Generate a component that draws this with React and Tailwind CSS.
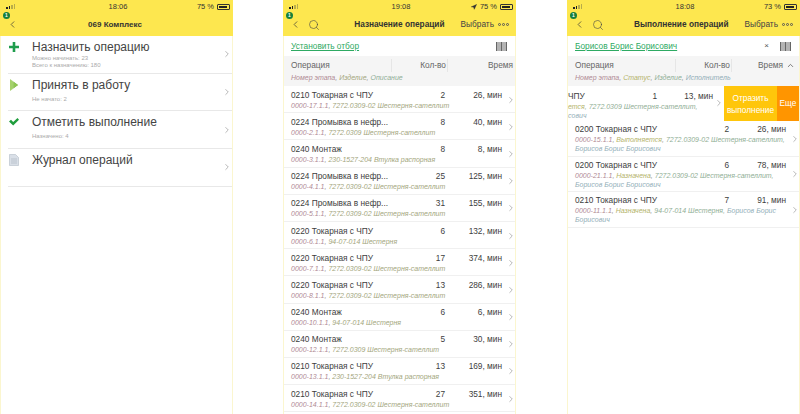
import { ChevronLeft, ChevronRight, ChevronUp, Search, Navigation } from "lucide-react";

const font = "font-['Liberation_Sans',Arial,sans-serif]";

const assignRows = [
  ["0210 Токарная с ЧПУ", 2, "26, мин", "0000-17.1.1", "7272.0309-02 Шестерня-сателлит"],
  ["0224 Промывка в нефр...", 8, "40, мин", "0000-2.1.1", "7272.0309 Шестерня-сателлит"],
  ["0240 Монтаж", 8, "8, мин", "0000-3.1.1", "230-1527-204 Втулка распорная"],
  ["0224 Промывка в нефр...", 25, "125, мин", "0000-4.1.1", "7272.0309-02 Шестерня-сателлит"],
  ["0224 Промывка в нефр...", 31, "155, мин", "0000-5.1.1", "7272.0309-02 Шестерня-сателлит"],
  ["0220 Токарная с ЧПУ", 6, "132, мин", "0000-6.1.1", "94-07-014 Шестерня"],
  ["0220 Токарная с ЧПУ", 17, "374, мин", "0000-7.1.1", "7272.0309-02 Шестерня-сателлит"],
  ["0220 Токарная с ЧПУ", 13, "286, мин", "0000-8.1.1", "7272.0309-02 Шестерня-сателлит"],
  ["0240 Монтаж", 6, "6, мин", "0000-10.1.1", "94-07-014 Шестерня"],
  ["0240 Монтаж", 5, "30, мин", "0000-12.1.1", "7272.0309 Шестерня-сателлит"],
  ["0210 Токарная с ЧПУ", 13, "169, мин", "0000-13.1.1", "230-1527-204 Втулка распорная"],
  ["0210 Токарная с ЧПУ", 27, "351, мин", "0000-14.1.1", "7272.0309-02 Шестерня-сателлит"],
];

// line1 is what follows the code and status on the first line, line2 goes below it
const doneRows = [
  ["0200 Токарная с ЧПУ", 2, "26, мин", "0000-15.1.1", "Выполняется", "7272.0309-02 Шестерня-сателлит,", "", "Борисов Борис Борисович"],
  ["0200 Токарная с ЧПУ", 6, "78, мин", "0000-21.1.1", "Назначена", "7272.0309-02 Шестерня-сателлит,", "", "Борисов Борис Борисович"],
  ["0210 Токарная с ЧПУ", 7, "91, мин", "0000-11.1.1", "Назначена", "94-07-014 Шестерня,", "Борисов Борис", "Борисович"],
];

const menu = [
  { title: "Назначить операцию", lines: ["Можно начинать: 23", "Всего к назначению: 180"], icon: "plus" },
  { title: "Принять в работу", lines: ["Не начато: 2"], icon: "play" },
  { title: "Отметить выполнение", lines: ["Назначено: 4"], icon: "check" },
  { title: "Журнал операций", lines: [], icon: "doc" },
];

function MenuIcon({ name }) {
  if (name === "plus")
    return (
      <svg width="12" height="12" viewBox="0 0 12 12">
        <path d="M4.700 1h2.600v3.700H11v2.600H7.300V11H4.700V7.300H1V4.700h3.700z" fill="#1f9d4d" />
      </svg>
    );
  if (name === "play")
    return (
      <svg width="12" height="12" viewBox="0 0 12 12">
        <path d="M2 0l3.500 3v6L2 12z" fill="#a5d16c" />
        <path d="M2 0l8 6-8 6 3.500-3V3z" fill="#7cb342" />
        <path d="M5.500 3L10 6 5.500 9z" fill="#8fc653" />
      </svg>
    );
  if (name === "check")
    return (
      <svg width="12" height="12" viewBox="0 0 12 12">
        <path d="M1 5.500L3 3.800l2.200 2.200L9.500 2 11 3.800 5.200 9.500z" fill="#1f9d3d" />
      </svg>
    );
  return (
    <svg width="12" height="12" viewBox="0 0 12 12">
      <path d="M1.500 0.500h6l3 3v8h-9z" fill="#d9dfe7" stroke="#b4bcc7" strokeWidth="0.6" />
      <path d="M3 5h6M3 7h6M3 9h6" stroke="#aab2bd" strokeWidth="0.6" />
    </svg>
  );
}

function Barcode() {
  return (
    <svg width="11" height="9" viewBox="0 0 11 9" className="shrink-0">
      <path d="M0 0h1.500v9H0zM2.500 0h1v9h-1zM4.500 0h2v9h-2zM7.500 0h1v9h-1zM9.500 0H11v9H9.500z" fill="#666" />
    </svg>
  );
}

function StatusBar({ time, battery, arrow }) {
  return (
    <div className="flex h-[13px] items-center justify-between pl-[6px] pr-[3px] text-[7.500px] text-[#333]">
      <div className="flex w-[60px] items-end gap-px">
        {[2, 3, 4, 5].map((h, i) => (
          <span
            key={i}
            className={i < 2 ? "w-[1.500px] bg-[#222]" : "w-[1.500px] bg-[#b8ac4a]"}
            style={{ height: h }}
          />
        ))}
      </div>
      <span>{time}</span>
      <div className="flex w-[60px] items-center justify-end gap-[3px]">
        {arrow && <Navigation size={6} fill="#333" />}
        <span>{battery} %</span>
        <span className="flex h-[6px] w-[13px] items-center rounded-[1px] border border-[#333] p-px">
          <span className="h-full w-[8px] bg-[#222]" />
        </span>
      </div>
    </div>
  );
}

function Header({ time, battery, arrow, title, search, action }) {
  return (
    <div className="relative h-[36px] shrink-0 bg-[#fde74f]">
      <StatusBar time={time} battery={battery} arrow={arrow} />
      <span className="absolute left-[3px] top-[12px] flex h-[7px] w-[7px] items-center justify-center rounded-full bg-[#15803d] text-[5px] font-bold text-white">
        1
      </span>
      <div className="flex h-[23px] items-center pl-[7px] pr-[7px]">
        <ChevronLeft size={11} className="text-[#333]" strokeWidth={1.5} />
        {search && <Search size={12} className="ml-[7px] text-[#444]" strokeWidth={1.2} />}
        <span
          className={
            search
              ? "flex-1 pr-[16px] text-right text-[8.300px] font-bold text-[#333]"
              : "flex-1 pr-[14px] text-center text-[8px] font-bold text-[#333]"
          }
        >
          {title}
        </span>
        {action && (
          <span className="flex items-center gap-[4px] text-[8.300px] text-[#444]">
            Выбрать
            <span className="flex gap-px">
              <i className="h-[3px] w-[3px] rounded-full border-[0.500px] border-[#555]" />
              <i className="h-[3px] w-[3px] rounded-full border-[0.500px] border-[#555]" />
              <i className="h-[3px] w-[3px] rounded-full border-[0.500px] border-[#555]" />
            </span>
          </span>
        )}
      </div>
    </div>
  );
}

function Phone({ header, children }) {
  return (
    <div className="flex h-[414px] w-[233px] shrink-0 flex-col overflow-hidden bg-white">
      {header}
      <div className="flex-1 border-x border-[#fbf6cf]">{children}</div>
    </div>
  );
}

function ColumnHead({ meta, last }) {
  return (
    <div className="h-[30px] bg-[#f5f5f5] pl-[7px] pr-[2px] pt-[3px]">
      <div className="flex h-[13px] items-center text-[8.300px] text-[#666]">
        <span className="w-[101px] border-r border-[#e6e6e6]">Операция</span>
        <span className="w-[56px] border-r border-[#e6e6e6] pr-[1px] text-right">Кол-во</span>
        <span className="flex flex-1 items-center justify-end gap-[3px]">{last}</span>
      </div>
      <div className="mt-[1px] text-[7px] italic leading-[9px]">{meta}</div>
    </div>
  );
}

function RowTop({ name, qty, time }) {
  return (
    <div className="flex h-[11px] items-center text-[8.300px] leading-[11px] text-[#3d3d3d]">
      <span className="w-[120px] whitespace-nowrap">{name}</span>
      <span className="w-[34px] text-right">{qty}</span>
      <span className="flex-1 text-right">{time}</span>
    </div>
  );
}

function AssignRow({ row }) {
  const [name, qty, time, code, item] = row;
  return (
    <div className="flex h-[27.200px] items-center border-b border-[#f0f0f0] pl-[7px] pt-[1px]">
      <div className="w-[211px] shrink-0">
        <RowTop name={name} qty={qty} time={time} />
        <div className="whitespace-nowrap text-[7px] italic leading-[9px]">
          <span className="text-[#b08a94]">{code}</span>
          <span className="text-[#888]">, </span>
          <span className="text-[#a3a67d]">{item}</span>
        </div>
      </div>
      <ChevronRight size={10} className="ml-[4px] shrink-0 text-[#aaa]" />
    </div>
  );
}

function DoneRow({ row }) {
  const [name, qty, time, code, status, item, who, who2] = row;
  return (
    <div className="flex h-[35.500px] items-center border-b border-[#f0f0f0] pl-[7px] pt-[1px]">
      <div className="w-[211px] shrink-0">
        <RowTop name={name} qty={qty} time={time} />
        <div className="text-[7px] italic leading-[9px]">
          <div className="whitespace-nowrap">
            <span className="text-[#b08a94]">{code}</span>
            <span className="text-[#888]">, </span>
            <span className="text-[#b4b36a]">{status}</span>
            <span className="text-[#888]">, </span>
            <span className="text-[#8fae95]">{item}</span>
            {who && <span className="text-[#92aeb8]"> {who}</span>}
          </div>
          <div className="text-[#92aeb8]">{who2}</div>
        </div>
      </div>
      <ChevronRight size={10} className="ml-[4px] shrink-0 text-[#aaa]" />
    </div>
  );
}

export default function App() {
  return (
    <div className={`flex h-[414px] w-[800px] overflow-hidden bg-white ${font}`}>
      <Phone header={<Header time="18:06" battery={75} title="069 Комплекс" />}>
        {menu.map((m) => (
          <div key={m.title} className="ml-[7px] flex h-[37.700px] border-b border-[#e8e8e8]">
            <div className="w-[24px] pt-[5px]">
              <MenuIcon name={m.icon} />
            </div>
            <div className="flex-1 pt-[4px]">
              <div className="text-[12px] leading-[14px] text-[#444]">{m.title}</div>
              <div className="flex h-[15px] flex-col justify-center text-[6px] leading-[7px] text-[#aaa]">
                {m.lines.map((l) => (
                  <div key={l}>{l}</div>
                ))}
              </div>
            </div>
            <div className="flex items-center">
              <ChevronRight size={10} className="text-[#aaa]" />
            </div>
          </div>
        ))}
      </Phone>

      <div className="ml-[50px]">
        <Phone header={<Header time="19:08" battery={75} arrow title="Назначение операций" search action />}>
          <div className="flex h-[20px] items-center justify-between pl-[7px] pr-[8px]">
            <span className="text-[8.300px] text-[#2eaa63] underline decoration-[0.500px]">Установить отбор</span>
            <Barcode />
          </div>
          <ColumnHead
            last="Время"
            meta={
              <>
                <span className="text-[#b08a94]">Номер этапа</span>
                <span className="text-[#888]">, </span>
                <span className="text-[#a3a67d]">Изделие</span>
                <span className="text-[#888]">, </span>
                <span className="text-[#8fae95]">Описание</span>
              </>
            }
          />
          {assignRows.map((r) => (
            <AssignRow key={r[3]} row={r} />
          ))}
        </Phone>
      </div>

      <div className="ml-[51px]">
        <Phone header={<Header time="18:08" battery={73} title="Выполнение операций" search action />}>
          <div className="flex h-[20px] items-center pl-[7px] pr-[8px]">
            <span className="flex-1 text-[8.300px] text-[#2eaa63] underline decoration-[0.500px]">
              Борисов Борис Борисович
            </span>
            <span className="mr-[11px] text-[8px] text-[#555]">×</span>
            <Barcode />
          </div>
          <ColumnHead
            last={
              <>
                Время
                <ChevronUp size={9} className="mr-[2px] text-[#555]" />
              </>
            }
            meta={
              <>
                <span className="text-[#b08a94]">Номер этапа</span>
                <span className="text-[#888]">, </span>
                <span className="text-[#b4b36a]">Статус</span>
                <span className="text-[#888]">, </span>
                <span className="text-[#8fae95]">Изделие</span>
                <span className="text-[#888]">, </span>
                <span className="text-[#92aeb8]">Исполнитель</span>
              </>
            }
          />
          <div className="flex h-[35px] items-stretch">
            <div className="relative flex-1 overflow-hidden">
              <div className="absolute left-0 top-[5px] w-[156px]">
                <div className="flex h-[11px] items-center text-[8.300px] text-[#3d3d3d]">
                  <span className="w-[84px]">ЧПУ</span>
                  <span className="w-[5px] text-right">1</span>
                  <span className="w-[56px] text-right">13, мин</span>
                </div>
                <div className="whitespace-nowrap text-[7px] italic leading-[9px] text-[#8fae95]">
                  <span className="text-[#b4b36a]">ется</span>, 7272.0309 Шестерня-сателлит,
                </div>
                <div className="text-[7px] italic leading-[9px] text-[#92aeb8]">сович</div>
              </div>
              <ChevronRight size={10} className="absolute right-[0px] top-[12px] text-[#aaa]" />
            </div>
            <div className="flex w-[53px] items-center justify-center bg-[#ffc60b] text-center text-[8.300px] leading-[12px] text-white">
              Отразить выполнение
            </div>
            <div className="flex w-[22px] items-center justify-center bg-[#ff9500] text-[8.300px] text-white">
              Еще
            </div>
          </div>
          {doneRows.map((r) => (
            <DoneRow key={r[3]} row={r} />
          ))}
        </Phone>
      </div>
    </div>
  );
}
